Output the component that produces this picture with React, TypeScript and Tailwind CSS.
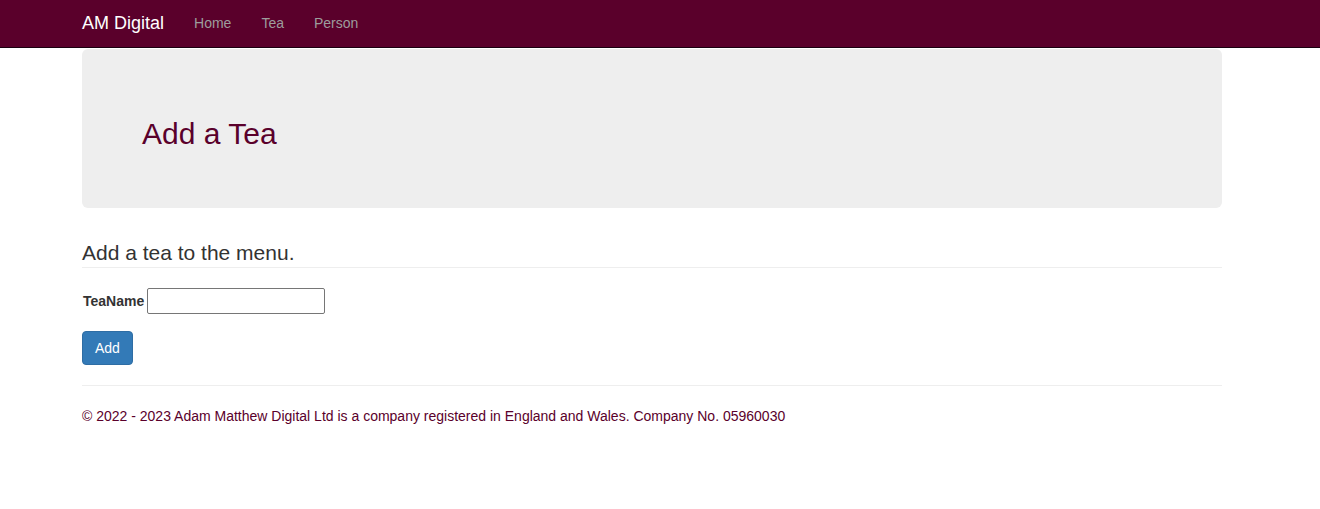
export default function App() {
  return (
    <div className="min-h-screen bg-white font-['Liberation_Sans',Arial,sans-serif] text-[14px] leading-[20px] text-[#333]">
      {/* top nav */}
      <nav className="h-[48px] border-b border-[#1a0010] bg-[#5a002b]">
        <div className="ml-[67px] flex h-full w-[1170px] items-center px-[15px] pb-[2px]">
          <a className="text-[18px] text-white">AM Digital</a>
          <ul className="ml-[30px] flex gap-[30px] text-[#9d9d9d]">
            <li>Home</li>
            <li>Tea</li>
            <li>Person</li>
          </ul>
        </div>
      </nav>

      <div className="ml-[67px] w-[1170px] px-[15px]">
        <div className="mt-px rounded-[6px] bg-[#eeeeee] px-[60px] py-[48px]">
          <h2 className="mb-[10px] mt-[20px] text-[30px] leading-[33px] text-[#5a002b]">
            Add a Tea
          </h2>
        </div>

        <h4 className="mt-[33px] text-[21px] leading-[24px]">Add a tea to the menu.</h4>
        <hr className="mt-[2px] border-[#eee]" />

        <form className="mt-[20px]">
          <div className="flex items-center">
            <label className="ml-px mr-[3px] font-bold">TeaName</label>
            <input
              type="text"
              className="h-[26px] w-[178px] rounded-[2px] border border-[#767676] bg-white px-1"
            />
          </div>
          <button
            type="button"
            className="mt-[17px] h-[34px] rounded-[4px] border border-[#2e6da4] bg-[#337ab7] px-[12px] text-white"
          >
            Add
          </button>
        </form>

        <hr className="mt-[20px] border-[#eee]" />
        <footer className="mt-[20px] text-[#5a002b]">
          © 2022 - 2023 Adam Matthew Digital Ltd is a company registered in England and Wales. Company No. 05960030
        </footer>
      </div>
    </div>
  );
}
